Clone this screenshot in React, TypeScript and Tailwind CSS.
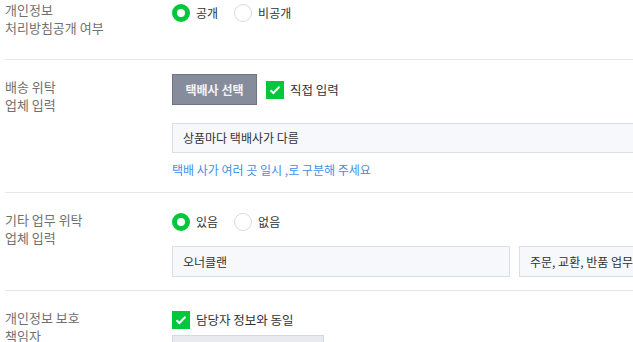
import React from 'react';

const FONT = { fontFamily: '"Noto Sans CJK KR", "Noto Sans", sans-serif' };

const Radio: React.FC<{ checked?: boolean; label: string }> = ({ checked, label }) => (
  <label className="flex items-center gap-[6px]">
    {checked ? (
      <span className="box-border h-[18px] w-[18px] rounded-full border-[5px] border-[#00c73c] bg-white" />
    ) : (
      <span className="box-border h-[18px] w-[18px] rounded-full border border-[#dadbde] bg-white" />
    )}
    <span className="text-[12px] leading-[18px] text-[#333]">{label}</span>
  </label>
);

const Check: React.FC<{ label: string }> = ({ label }) => (
  <label className="flex items-center gap-[6px]">
    <span className="flex h-[18px] w-[18px] items-center justify-center bg-[#00c73c]">
      <svg width="12" height="10" viewBox="0 0 12 10" fill="none">
        <path d="M1.5 5.2 4.4 8 10.5 1.8" stroke="#fff" strokeWidth="2" />
      </svg>
    </span>
    <span className="text-[12.5px] leading-[18px] text-[#333]">{label}</span>
  </label>
);

const Label: React.FC<{ lines: string[] }> = ({ lines }) => (
  <div className="mt-[4px] w-[167px] shrink-0 text-[13px] leading-[18px] text-[#707070]">
    {lines.map((l) => (
      <div key={l}>{l}</div>
    ))}
  </div>
);

const Field: React.FC<{ value: string; className?: string }> = ({ value, className = '' }) => (
  <div
    className={`box-border flex items-center border border-[#dcdee3] bg-[#f7f8fb] pl-[10px] text-[12px] text-[#333] ${className}`}
  >
    {value}
  </div>
);

export default function App() {
  return (
    <div className="h-[342px] w-[633px] overflow-hidden bg-white" style={FONT}>
      <div className="-mt-[3px] pl-[5px]">
        <section className="box-border flex h-[63px] border-b border-[#e6e7ea]">
          <Label lines={['개인정보', '처리방침공개 여부']} />
          <div className="flex h-[31px] items-center gap-[16px]">
            <Radio checked label="공개" />
            <Radio label="비공개" />
          </div>
        </section>

        <section className="box-border flex h-[133px] border-b border-[#e6e7ea] pt-[14px]">
          <Label lines={['배송 위탁', '업체 입력']} />
          <div className="flex flex-col">
            <div className="flex h-[31px] items-center gap-[9px]">
              <button className="box-border h-[31px] w-[85px] border border-[#6f7484] bg-[#878c9c] text-[12px] font-bold text-[#f3f3f5]">
                택배사 선택
              </button>
              <Check label="직접 입력" />
            </div>
            <Field value="상품마다 택배사가 다름" className="mt-[18px] h-[30px] w-[520px]" />
            <div className="mt-[8px] text-[12px] leading-[18px] text-[#3d8fe8]">
              택배 사가 여러 곳 일시 ,로 구분해 주세요
            </div>
          </div>
        </section>

        <section className="box-border flex h-[98px] border-b border-[#e6e7ea] pt-[14px]">
          <Label lines={['기타 업무 위탁', '업체 입력']} />
          <div className="flex flex-col">
            <div className="flex h-[30px] items-center gap-[16px]">
              <Radio checked label="있음" />
              <Radio label="없음" />
            </div>
            <div className="mt-[9px] flex gap-[9px]">
              <Field value="오너클랜" className="h-[31px] w-[338px] shrink-0" />
              <Field value="주문, 교환, 반품 업무" className="h-[31px] w-[338px] shrink-0" />
            </div>
          </div>
        </section>

        <section className="box-border flex pt-[14px]">
          <Label lines={['개인정보 보호', '책임자']} />
          <div className="flex flex-col">
            <div className="flex h-[30px] items-center">
              <Check label="담당자 정보와 동일" />
            </div>
            <div className="box-border h-[30px] w-[152px] border border-[#d6d8de] bg-[#e9eaef]" />
          </div>
        </section>
      </div>
    </div>
  );
}
